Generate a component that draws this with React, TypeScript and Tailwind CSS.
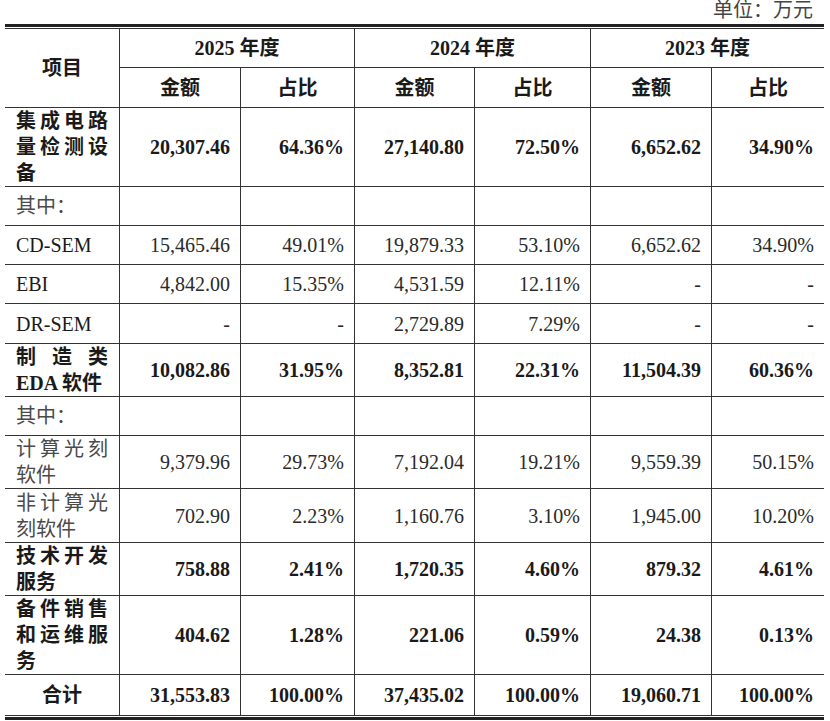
import React from "react";

type Row = {
  label: string;
  bold?: boolean;
  center?: boolean;
  cjk?: boolean;
  values: string[];
};

const empty = ["", "", "", "", "", ""];

const rows: Row[] = [
  {
    label: "集成电路量检测设备",
    bold: true,
    values: ["20,307.46", "64.36%", "27,140.80", "72.50%", "6,652.62", "34.90%"],
  },
  { label: "其中：", cjk: true, values: empty },
  {
    label: "CD-SEM",
    values: ["15,465.46", "49.01%", "19,879.33", "53.10%", "6,652.62", "34.90%"],
  },
  {
    label: "EBI",
    values: ["4,842.00", "15.35%", "4,531.59", "12.11%", "-", "-"],
  },
  {
    label: "DR-SEM",
    values: ["-", "-", "2,729.89", "7.29%", "-", "-"],
  },
  {
    label: "制造类EDA 软件",
    bold: true,
    values: ["10,082.86", "31.95%", "8,352.81", "22.31%", "11,504.39", "60.36%"],
  },
  { label: "其中：", cjk: true, values: empty },
  {
    label: "计算光刻软件",
    cjk: true,
    values: ["9,379.96", "29.73%", "7,192.04", "19.21%", "9,559.39", "50.15%"],
  },
  {
    label: "非计算光刻软件",
    cjk: true,
    values: ["702.90", "2.23%", "1,160.76", "3.10%", "1,945.00", "10.20%"],
  },
  {
    label: "技术开发服务",
    bold: true,
    values: ["758.88", "2.41%", "1,720.35", "4.60%", "879.32", "4.61%"],
  },
  {
    label: "备件销售和运维服务",
    bold: true,
    values: ["404.62", "1.28%", "221.06", "0.59%", "24.38", "0.13%"],
  },
  {
    label: "合计",
    bold: true,
    center: true,
    values: ["31,553.83", "100.00%", "37,435.02", "100.00%", "19,060.71", "100.00%"],
  },
];

const years = ["2025 年度", "2024 年度", "2023 年度"];

export default function App() {
  return (
    <div className="min-h-screen bg-white font-['Liberation_Serif','Noto_Sans_CJK_SC',serif] text-[20px] text-[#1a1a1a]">
      <div className="ml-[5px] w-[819px]">
        {/* unit caption */}
        <div className="h-6 pr-[11px] text-right leading-[20px] text-[#444]">
          单位：万元
        </div>

        <div className="border-y-[3px] border-[#222]">
          <div className="my-px grid grid-cols-[114px_121px_114px_120px_116px_121px_113px] grid-rows-[39px_40px_79px_39px_39px_39px_40px_53px_39px_53px_54px_53px_79px_40px] border-y border-[#333]">
            {/* header */}
            <div className="row-span-2 flex items-center justify-center border-b border-[#333] font-bold">
              项目
            </div>
            {years.map((y) => (
              <div
                key={y}
                className="col-span-2 flex items-center justify-center border-b border-l border-[#333] font-bold"
              >
                {y}
              </div>
            ))}
            {years.map((y) => (
              <React.Fragment key={y + "-sub"}>
                <div className="flex items-center justify-center border-b border-l border-[#333] font-bold">
                  金额
                </div>
                <div className="flex items-center justify-center border-b border-l border-[#333] font-bold">
                  占比
                </div>
              </React.Fragment>
            ))}

            {/* body */}
            {rows.map((r, i) => {
              const last = i === rows.length - 1;
              return (
                <React.Fragment key={i}>
                  <div
                    className={`flex items-center px-[11px] ${last ? "" : "border-b"} border-[#333] ${
                      r.center ? "justify-center" : ""
                    }`}
                  >
                    <div
                      className={`w-full leading-[26px] ${r.center ? "text-center" : "text-justify"} ${
                        r.bold ? "font-bold" : ""
                      } ${r.cjk ? "text-[#4a4a4a]" : ""}`}
                    >
                      {r.label}
                    </div>
                  </div>
                  {r.values.map((v, j) => (
                    <div
                      key={j}
                      className={`flex items-center justify-end border-l ${last ? "" : "border-b"} border-[#333] pr-[10px] ${
                        r.bold ? "font-bold" : "text-[#2a2a2a]"
                      }`}
                    >
                      {v}
                    </div>
                  ))}
                </React.Fragment>
              );
            })}
          </div>
        </div>
      </div>
    </div>
  );
}
